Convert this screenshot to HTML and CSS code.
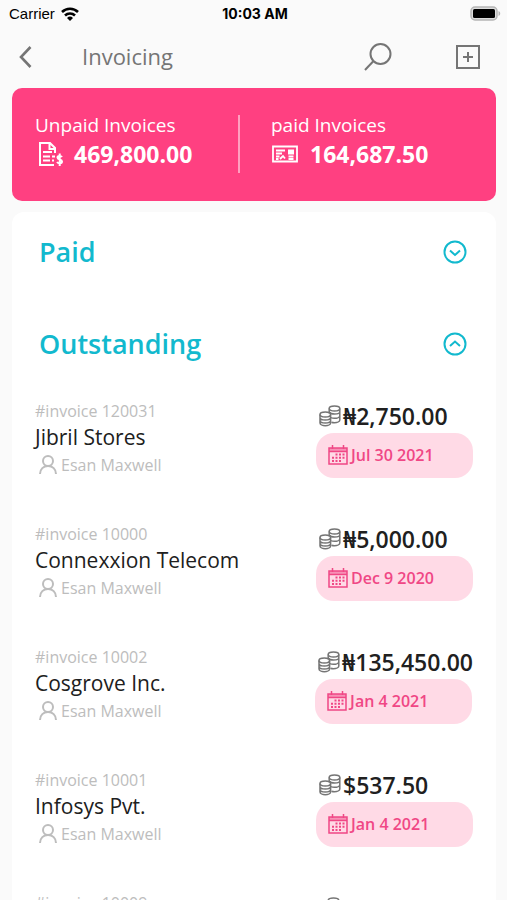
FILE: index.html
```html
<!DOCTYPE html>
<html lang="en">
<head>
<meta charset="utf-8">
<meta name="viewport" content="width=device-width, initial-scale=1">
<title>Invoicing</title>
<link rel="stylesheet" href="styles.css">
</head>
<body>
<svg class="symbols" aria-hidden="true">
  <symbol id="user" viewBox="0 0 18 20"><circle cx="9" cy="6" r="5"/><path d="M1 19c0-5 3.500-8 8-8s8 3 8 8"/></symbol>
  <symbol id="coins" viewBox="0 0 22 22">
    <ellipse cx="15.500" cy="3.500" rx="5.300" ry="2.500"/>
    <path d="M10.200 3.500v5M20.800 3.500v11.500c0 1.500-2.500 2.700-5.300 2.700-1 0-2-.1-3-.5M10.200 7c1 1.500 3 2 5.300 2 2.800 0 5.300-1 5.300-2.300M12 12.700c1 .5 2.200.6 3.500.6 2.800 0 5.300-1.200 5.300-2.600"/>
    <ellipse cx="6.300" cy="9.500" rx="5.300" ry="2.500"/>
    <path d="M1 9.500v8.500c0 1.500 2.500 2.700 5.300 2.700s5.300-1.200 5.300-2.700V9.500M1 12.500c0 1.500 2.500 2.500 5.300 2.500s5.300-1 5.300-2.500M1 15.500c0 1.500 2.500 2.500 5.300 2.500s5.300-1 5.300-2.500"/>
  </symbol>
  <symbol id="calendar" viewBox="0 0 20 20">
    <path d="M1 3h18v16H1zM1 6.500h18M4.500 0v4M15.500 0v4"/>
    <path d="M1 4.500h18" stroke-opacity=".5" stroke-width="3"/>
    <path stroke-dasharray="2 1.500" stroke-width="2" d="M7.500 9.500h9M4 12.800h13M4 16h9.500"/>
  </symbol>
</svg>

<header>
  <div class="status">
    <div class="carrier">Carrier
      <svg width="18" height="14" viewBox="0 0 18 14" aria-hidden="true"><g fill="none" stroke="#000" stroke-width="2.600"><path d="M1 5a11.500 11.500 0 0 1 16 0M4 8.500a7.200 7.200 0 0 1 10 0"/></g><path d="M6 11a4.300 4.300 0 0 1 6 0L9 14z"/></svg>
    </div>
    <div class="clock">10:03 AM</div>
    <svg class="battery" width="31" height="15" viewBox="0 0 31 15" aria-hidden="true"><rect x="1" y="1" width="26" height="13" rx="4" fill="#ddd" stroke="#b5b5b5" stroke-width="1.500"/><rect x="3" y="3" width="22" height="9" rx="1.500"/><path d="M28.500 5c2.300 1 2.300 4 0 5z" fill="#b5b5b5"/></svg>
  </div>
  <nav class="toolbar">
    <button type="button" class="icon-button" aria-label="Back"><svg width="14" height="24" viewBox="0 0 14 24"><path d="M12.500 2 3 12l9.500 10" stroke-width="2.600"/></svg></button>
    <h1>Invoicing</h1>
    <button type="button" class="icon-button search" aria-label="Search"><svg width="28" height="28" viewBox="0 0 28 28"><circle cx="16.500" cy="11" r="10"/><path d="M9.500 18 1 27"/></svg></button>
    <button type="button" class="icon-button" aria-label="Add invoice"><svg width="24" height="24" viewBox="0 0 24 24"><path d="M1 1h22v22H1zM12 7v10M7 12h10"/></svg></button>
  </nav>
</header>

<main>
  <section class="summary">
    <div class="total">
      <h2>Unpaid Invoices</h2>
      <p><svg width="28" height="26" viewBox="0 0 28 26" aria-hidden="true"><g fill="none" stroke="#fff" stroke-width="2"><path d="M19 24H5V2h10l5 5v5M14.500 2v6H20M8 11h9M8 15.500h7M8 19.500h7M17 15.500h3M17 19.500h2"/><path d="M27 16c-1-1.500-4.500-1.500-4.500.5 0 2.500 4.500 1.500 4.500 4 0 2-3.500 2.500-5 .5M24.700 12.500v12.500"/></g></svg><strong>469,800.00</strong></p>
    </div>
    <div class="total">
      <h2>paid Invoices</h2>
      <p><svg width="28" height="26" viewBox="0 0 28 26" aria-hidden="true"><g fill="none" stroke="#fff" stroke-width="1.800"><path d="M2 5.500h24v15H2zM5 9.500h9M5 12.500h6M5 15.500h3.500M5 18h2.500M9 18l3-3 2 2.500M17.500 15.500h5M17.500 18h5"/></g><path fill="#fff" d="M17 8.500h6v5h-6z"/></svg><strong>164,687.50</strong></p>
    </div>
  </section>

  <section class="panel">
    <div class="group">
      <h2>Paid</h2>
      <button type="button" class="toggle" aria-label="Show paid invoices"><svg width="24" height="24" viewBox="0 0 24 24"><circle cx="12" cy="12" r="10.500"/><path d="m7 10.500 5 4.500 5-4.500"/></svg></button>
    </div>
    <div class="group">
      <h2>Outstanding</h2>
      <button type="button" class="toggle" aria-label="Hide outstanding invoices"><svg width="24" height="24" viewBox="0 0 24 24"><circle cx="12" cy="12" r="10.500"/><path d="m7 14 5-4.500 5 4.500"/></svg></button>
    </div>
    <ul class="invoices">
      <li>
        <div class="client"><p class="number">#invoice 120031</p><h3>Jibril Stores</h3><p class="person"><svg><use href="#user"/></svg>Esan Maxwell</p></div>
        <div class="due"><p class="amount"><svg><use href="#coins"/></svg>₦2,750.00</p><p class="date"><svg><use href="#calendar"/></svg>Jul 30 2021</p></div>
      </li>
      <li>
        <div class="client"><p class="number">#invoice 10000</p><h3>Connexxion Telecom</h3><p class="person"><svg><use href="#user"/></svg>Esan Maxwell</p></div>
        <div class="due"><p class="amount"><svg><use href="#coins"/></svg>₦5,000.00</p><p class="date"><svg><use href="#calendar"/></svg>Dec 9 2020</p></div>
      </li>
      <li>
        <div class="client"><p class="number">#invoice 10002</p><h3>Cosgrove Inc.</h3><p class="person"><svg><use href="#user"/></svg>Esan Maxwell</p></div>
        <div class="due"><p class="amount"><svg><use href="#coins"/></svg>₦135,450.00</p><p class="date"><svg><use href="#calendar"/></svg>Jan 4 2021</p></div>
      </li>
      <li>
        <div class="client"><p class="number">#invoice 10001</p><h3>Infosys Pvt.</h3><p class="person"><svg><use href="#user"/></svg>Esan Maxwell</p></div>
        <div class="due"><p class="amount"><svg><use href="#coins"/></svg>$537.50</p><p class="date"><svg><use href="#calendar"/></svg>Jan 4 2021</p></div>
      </li>
      <li>
        <div class="client"><p class="number">#invoice 10009</p></div>
        <div class="due"><p class="amount"><svg><use href="#coins"/></svg>₦245,400.00</p></div>
      </li>
    </ul>
  </section>
</main>
</body>
</html>
```

FILE: styles.css
```css
* { box-sizing: border-box; }

body {
  margin: 0;
  height: 100vh;
  overflow: hidden;
  display: flex;
  flex-direction: column;
  background: #fafafa;
  color: #202020;
  font-family: "Open Sans", "Noto Sans", sans-serif;
}

h1, h2, h3, p, ul { margin: 0; padding: 0; font-weight: 400; }
svg { flex: none; }
.symbols { display: none; }

button {
  display: flex;
  padding: 0;
  border: 0;
  background: none;
}

.status {
  display: grid;
  grid-template-columns: 1fr auto 1fr;
  align-items: center;
  height: 27px;
  padding: 0 6px 0 9px;
  color: #000;
  font-family: "Liberation Sans", sans-serif;
  font-size: 15px;
}
.carrier { display: flex; align-items: center; gap: 6px; }
.clock { font-family: Inter, sans-serif; font-size: 14px; font-weight: 700; }
.battery { justify-self: end; }

.toolbar {
  display: flex;
  align-items: center;
  height: 60px;
  padding: 0 27px 0 18px;
}
.icon-button svg, .toggle svg { fill: none; stroke: #757575; stroke-width: 2; }
h1 {
  flex: 1;
  margin-left: 50px;
  padding-bottom: 2px;
  color: #757575;
  font-size: 22px;
  line-height: 28px;
}
.search { margin-right: 64px; }

main {
  flex: 1;
  min-height: 0;
  display: flex;
  flex-direction: column;
  gap: 11px;
  padding: 1px 11px 0 12px;
}

.summary {
  flex: none;
  display: grid;
  grid-template-columns: 203fr 234fr;
  padding: 27px 24px 28px 23px;
  border-radius: 10px;
  background: #ff4081;
  color: #fff;
}
.total h2 { font-size: 19px; line-height: 20px; }
.total p { display: flex; align-items: center; gap: 11px; line-height: 38px; }
.total strong { font-size: 23px; font-weight: 700; }
.total + .total { padding-left: 31px; border-left: 2px solid #ffa0c0; }

.panel {
  flex: 1;
  min-height: 0;
  overflow: hidden;
  border-radius: 12px 12px 0 0;
  background: #fff;
}
.group {
  display: flex;
  align-items: center;
  justify-content: space-between;
  height: 92px;
  padding: 0 29px 13px 27px;
}
.group h2 { color: #12b9ce; font-size: 27px; font-weight: 600; line-height: 36px; }
.toggle svg { stroke: #12b9ce; stroke-width: 2; }

.invoices { list-style: none; }
.invoices li {
  display: flex;
  justify-content: space-between;
  height: 123px;
  padding: 3px 23px 0;
}
.number, .person { color: #bdbdbd; font-size: 16px; }
.number { line-height: 24px; }
.client h3 { font-size: 21px; line-height: 28px; }
.person { display: flex; align-items: center; gap: 4px; padding-left: 4px; line-height: 28px; }
.person svg { width: 18px; height: 20px; fill: none; stroke: #bdbdbd; stroke-width: 2; }

.due { min-width: 157px; }
.amount {
  display: flex;
  align-items: center;
  gap: 2px;
  padding: 1px 0 1px 3px;
  font-size: 23px;
  font-weight: 600;
  line-height: 32px;
}
.amount svg { width: 22px; height: 22px; fill: none; stroke: #757575; stroke-width: 1.5px; }
.date {
  display: flex;
  align-items: center;
  gap: 3px;
  width: 157px;
  height: 45px;
  padding: 0 0 1px 12px;
  border-radius: 18px;
  background: #ffdae6;
  color: #f04785;
  font-size: 16px;
  font-weight: 600;
}
.date svg { width: 20px; height: 20px; fill: none; stroke: #f04785; stroke-width: 1.5px; }
```
